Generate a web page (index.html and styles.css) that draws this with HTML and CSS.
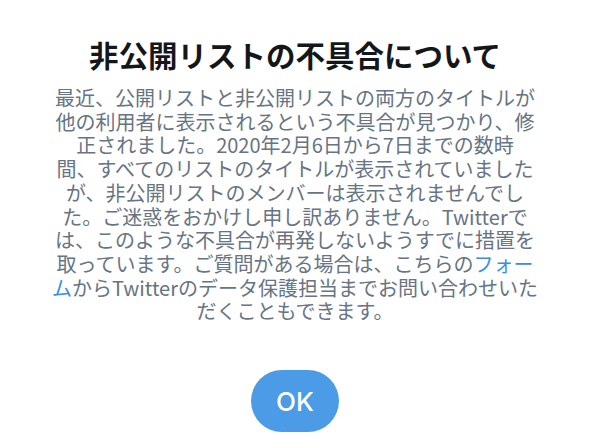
FILE: index.html
```html
<!DOCTYPE html>
<html lang="ja">
<head>
<meta charset="utf-8">
<title>非公開リストの不具合について</title>
<link rel="stylesheet" href="styles.css">
</head>
<body>
<main class="dialog">
  <h1 class="dialog-title">非公開リストの不具合について</h1>
  <p class="dialog-body">最近、公開リストと非公開リストの両方のタイトルが<br>他の利用者に表示されるという不具合が見つかり、修<br>正されました。2020年2月6日から7日までの数時<br>間、すべてのリストのタイトルが表示されていました<br>が、非公開リストのメンバーは表示されませんでし<br>た。ご迷惑をおかけし申し訳ありません。Twitterで<br>は、このような不具合が再発しないようすでに措置を<br>取っています。ご質問がある場合は、こちらの<a class="dialog-link" href="#">フォー<br>ム</a>からTwitterのデータ保護担当までお問い合わせいた<br>だくこともできます。</p>
  <button class="dialog-button" type="button">OK</button>
</main>
</body>
</html>
```

FILE: styles.css
```css
html, body {
  margin: 0;
  padding: 0;
  background: #ffffff;
}

body {
  width: 590px;
  height: 444px;
  overflow: hidden;
  font-family: "Noto Sans CJK JP", "Noto Sans", sans-serif;
}

.dialog {
  display: flex;
  flex-direction: column;
  align-items: center;
  padding-top: 36px;
}

.dialog-title {
  margin: 0;
  font-size: 29.5px;
  line-height: 36px;
  font-weight: 700;
  color: #14171a;
  text-align: center;
}

.dialog-body {
  margin: 14px 0 0;
  width: 560px;
  font-size: 20px;
  line-height: 23.7px;
  color: #667483;
  text-align: center;
}

.dialog-link {
  color: #3b8fde;
  text-decoration: none;
}

.dialog-button {
  margin-top: 47px;
  width: 88px;
  height: 62px;
  border: none;
  border-radius: 31px;
  background: #4b9be6;
  color: #ffffff;
  font-family: Inter, "Liberation Sans", sans-serif;
  font-size: 26px;
  font-weight: 500;
  padding: 0;
}
```
